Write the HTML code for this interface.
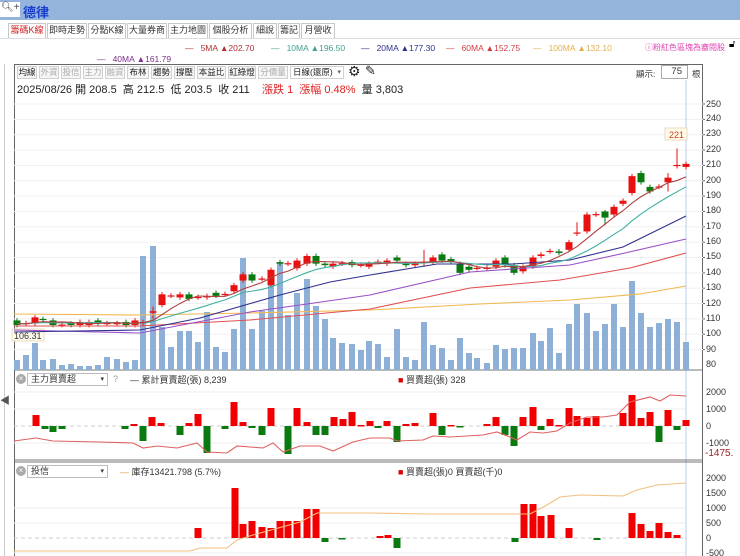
<!DOCTYPE html>
<html><head><meta charset="utf-8">
<style>
*{margin:0;padding:0;box-sizing:border-box}
body{width:740px;height:556px;overflow:hidden;background:#fff;font-family:"Liberation Sans","Noto Sans CJK TC",sans-serif;position:relative;font-size:11px;color:#333}
.abs{position:absolute;white-space:nowrap}
#top{left:0;top:0;width:740px;height:20px;background:#94b4dc}
.tab{position:absolute;top:23px;height:15px;border:1px solid #c8c8c8;border-bottom:none;background:#fff;font-size:9px;line-height:13px;text-align:center;color:#333;white-space:nowrap;overflow:hidden}
.tb{position:absolute;top:66px;height:13px;border:1px solid #d0d0d0;background:#f6f6f6;font-size:8.5px;line-height:11px;text-align:center;color:#222;white-space:nowrap;overflow:hidden}
.tb.d{color:#aaa}
.lg{font-size:8.5px}
</style></head><body>
<div id="top" class="abs"></div>
<div class="abs" style="left:0;top:2px;width:20px;height:15px;background:#fff"></div>
<div class="abs" style="left:1px;top:2px;font-size:10px;color:#444">🔍︎+</div>
<div class="abs" style="left:23px;top:2px;font-size:13px;font-weight:bold;color:#1a3fd0">德律</div>
<div class="abs" style="left:0;top:38px;width:740px;height:1px;background:#ddd"></div>
<div class="tab" style="left:8px;width:38px;color:#d02020">籌碼K線</div>
<div class="tab" style="left:47px;width:40px">即時走勢</div>
<div class="tab" style="left:88px;width:38px">分點K線</div>
<div class="tab" style="left:127px;width:40px">大量券商</div>
<div class="tab" style="left:168px;width:40px">主力地圖</div>
<div class="tab" style="left:209px;width:43px">個股分析</div>
<div class="tab" style="left:253px;width:24px">細說</div>
<div class="tab" style="left:278px;width:22px">籌記</div>
<div class="tab" style="left:301px;width:34px">月營收</div>

<div class="abs lg" style="left:185px;top:43px;color:#b03030">—&nbsp;&nbsp;&nbsp;5MA ▲202.70</div>
<div class="abs lg" style="left:271px;top:43px;color:#40a090">—&nbsp;&nbsp;&nbsp;10MA ▲196.50</div>
<div class="abs lg" style="left:361px;top:43px;color:#303090">—&nbsp;&nbsp;&nbsp;20MA ▲177.30</div>
<div class="abs lg" style="left:446px;top:43px;color:#d04040">—&nbsp;&nbsp;&nbsp;60MA ▲152.75</div>
<div class="abs lg" style="left:533px;top:43px;color:#e0b050">—&nbsp;&nbsp;&nbsp;100MA ▲132.10</div>
<div class="abs" style="left:645px;top:42px;font-size:8px;color:#e040b0">ⓘ粉紅色區塊為審閱股</div>
<div class="abs" style="left:729px;top:39px;font-size:10px;color:#000">🔓︎</div>
<div class="abs lg" style="left:97px;top:54px;color:#803090">—&nbsp;&nbsp;&nbsp;40MA ▲161.79</div>

<div class="abs" style="left:14px;top:64px;width:689px;height:492px;border:1px solid #666;border-bottom:none"></div>
<div class="abs" style="left:4px;top:64px;width:1px;height:492px;background:#ccc"></div>
<div class="abs" style="left:0;top:392px;font-size:10px;color:#555">◀</div>

<div class="tb" style="left:17px;width:20px">均線</div>
<div class="tb d" style="left:39px;width:20px">外資</div>
<div class="tb d" style="left:61px;width:20px">投信</div>
<div class="tb d" style="left:83px;width:20px">主力</div>
<div class="tb d" style="left:105px;width:20px">融資</div>
<div class="tb" style="left:127px;width:22px">布林</div>
<div class="tb" style="left:151px;width:21px">趨勢</div>
<div class="tb" style="left:174px;width:21px">撐壓</div>
<div class="tb" style="left:197px;width:29px">本益比</div>
<div class="tb" style="left:228px;width:28px">紅綠燈</div>
<div class="tb d" style="left:258px;width:30px">分價量</div>
<div class="tb" style="left:290px;width:54px;background:#fff;text-align:left;padding-left:2px">日線(還原)<span style="float:right;font-size:7px;color:#666;margin-right:2px">▾</span></div>
<div class="abs" style="left:348px;top:63px;font-size:14px;color:#222">⚙</div>
<div class="abs" style="left:365px;top:63px;font-size:13px;color:#222">✎</div>
<div class="abs" style="left:636px;top:68px;font-size:8.5px;color:#333">顯示:</div>
<div class="abs" style="left:661px;top:65px;width:27px;height:14px;border:1px solid #aaa;font-size:9.5px;line-height:12px;text-align:right;padding-right:5px">75</div>
<div class="abs" style="left:692px;top:68px;font-size:8.5px;color:#333">根</div>
<div class="abs" style="left:17px;top:81px;font-size:11px;color:#222">2025/08/26 開 208.5&nbsp; 高 212.5&nbsp; 低 203.5&nbsp; 收 211&nbsp;&nbsp;&nbsp; <span style="color:#e02020">漲跌 1&nbsp; 漲幅 0.48%</span>&nbsp; 量 3,803</div>

<div class="abs" style="left:27px;top:373px;width:81px;height:13px;border:1px solid #bbb;font-size:9px;line-height:11px;padding-left:3px;color:#333">主力買賣超<span style="float:right;font-size:7px;margin-right:3px">▾</span></div>
<div class="abs" style="left:16px;top:374px;width:10px;height:10px;border-radius:50%;background:#aaa;color:#fff;font-size:8px;line-height:10px;text-align:center">×</div>
<div class="abs" style="left:113px;top:374px;font-size:9px;color:#999">?</div>
<div class="abs" style="left:130px;top:373px;font-size:9px;color:#333">— 累計買賣超(張) 8,239</div>
<div class="abs" style="left:398px;top:373px;font-size:9px;color:#333"><span style="color:#d00">■</span> 買賣超(張) 328</div>

<div class="abs" style="left:27px;top:465px;width:81px;height:13px;border:1px solid #bbb;font-size:9px;line-height:11px;padding-left:3px;color:#333">投信<span style="float:right;font-size:7px;margin-right:3px">▾</span></div>
<div class="abs" style="left:16px;top:466px;width:10px;height:10px;border-radius:50%;background:#aaa;color:#fff;font-size:8px;line-height:10px;text-align:center">×</div>
<div class="abs" style="left:120px;top:465px;font-size:9px;color:#333"><span style="color:#e0a040">—</span> 庫存13421.798 (5.7%)</div>
<div class="abs" style="left:398px;top:465px;font-size:9px;color:#333"><span style="color:#d00">■</span> 買賣超(張)0 買賣超(千)0</div>

<svg class="abs" style="left:0;top:0" width="740" height="556" id="g">
<g font-family="Liberation Sans" font-size="9" fill="#333">
<text x="706" y="107">250</text><text x="706" y="136">230</text><text x="706" y="121">240</text>
<text x="706" y="152">220</text><text x="706" y="167">210</text><text x="706" y="183">200</text>
<text x="706" y="198">190</text><text x="706" y="213">180</text><text x="706" y="229">170</text>
<text x="706" y="244">160</text><text x="706" y="259">150</text><text x="706" y="275">140</text>
<text x="706" y="290">130</text><text x="706" y="306">120</text><text x="706" y="321">110</text>
<text x="706" y="336">100</text><text x="706" y="352">90</text><text x="706" y="367">80</text>
<text x="706" y="395">2000</text><text x="706" y="412">1000</text><text x="706" y="429">0</text>
<text x="706" y="446">-1000</text>
<text x="705" y="456" fill="#a02020" font-size="10">-1475.</text>
<text x="706" y="481">2000</text><text x="706" y="496">1500</text><text x="706" y="511">1000</text>
<text x="706" y="526">500</text><text x="706" y="541">0</text><text x="706" y="556">-500</text>
</g>
<rect x="665" y="128" width="22" height="12" fill="#fffbe8" stroke="#e8dcc0"/>
<text x="669" y="138" font-family="Liberation Sans" font-size="9" fill="#d04020">221</text>
<rect x="12" y="329" width="32" height="12" fill="#fffbe8" stroke="#e8dcc0"/>
<text x="14" y="339" font-family="Liberation Sans" font-size="9" fill="#334">106.31</text>
</svg>
<script>
var S='http://www.w3.org/2000/svg',g=document.getElementById('g');
function el(t,a){var e=document.createElementNS(S,t);for(var k in a)e.setAttribute(k,a[k]);g.insertBefore(e,g.firstChild);return e}
function Y(p){return 104+(250-p)*1.535}
[[14,370,703,370],[14,460,703,460],[14,462,703,462]].forEach(function(l){el('line',{x1:l[0],y1:l[1],x2:l[2],y2:l[3],stroke:'#777'})});
el('line',{x1:686,y1:80,x2:686,y2:556,stroke:'#b8cce8'});
for(var p=90;p<=250;p+=10){el('line',{x1:14,y1:Y(p),x2:703,y2:Y(p),stroke:'#f0f0f0'});el('line',{x1:702,y1:Y(p),x2:705,y2:Y(p),stroke:'#666'})}
[392,409,443].forEach(function(y){el('line',{x1:14,y1:y,x2:686,y2:y,stroke:'#eee'})});
[508,523,553].forEach(function(y){el('line',{x1:14,y1:y,x2:686,y2:y,stroke:'#eee'})});
el('line',{x1:14,y1:426,x2:686,y2:426,stroke:'#ccc','stroke-dasharray':'4,3'});
el('line',{x1:14,y1:538,x2:686,y2:538,stroke:'#ccc','stroke-dasharray':'4,3'});
var vx=[17,26,35,43,53,62,71,80,89,98,107,117,126,135,143,153,162,171,180,189,198,207,216,225,234,243,252,262,271,280,288,297,307,316,325,333,342,352,361,369,378,387,397,406,415,424,433,442,451,460,469,477,487,496,505,514,523,533,541,550,559,569,577,587,596,605,614,623,632,641,650,659,668,677,686];
var vy=[360,355,343,360,359,365,364,366,366,365,357,359,362,360,256,246,327,347,331,331,342,312,347,352,329,258,329,311,285,262,315,293,279,306,319,338,343,344,350,341,344,357,329,357,360,322,345,348,360,338,353,358,363,345,349,348,348,333,341,328,353,324,304,313,331,324,304,327,281,313,327,323,319,322,342];
var G=document.createElementNS(S,'g');
for(var i=0;i<vx.length;i++){var r=document.createElementNS(S,'rect');r.setAttribute('x',vx[i]-3);r.setAttribute('y',vy[i]);r.setAttribute('width',6);r.setAttribute('height',370-vy[i]);r.setAttribute('fill','#8fb0d6');G.appendChild(r)}
g.appendChild(G);
var C=[[109,106],[107,107.3],[107,111],[110,109.5],[109,106],[106,106.3],[107,106],[106,108],[106,108],[109,107],[107,107.3],[107,107.3],[108,106],[106,109],[107,108],[114,115,110,118],[119,126],[125,125.3],[124,126],[126,123],[124,124.3],[124,125],[127,125],[126,126.3],[128,132],[135,139],[139,135],[136,136.3],[132,142],[147,146],[146,146.3],[143,148],[146,151],[151,146],[146,145],[144,146],[146,146.3],[147,145],[145,145.3],[144,146],[147,147.3],[146,148],[150,148],[146,145],[145,146],[147,147.3,144,155],[147,150],[152,148],[149,147],[146,140],[144,142],[143,143.3],[143,143.3],[144,148],[150,145],[145,140],[141,144],[144,150],[151,152],[154,154.3],[154,153],[155,160],[166,166.3,164,173],[167,178],[178,178.3],[180,176,171,181],[178,183],[185,187],[192,203],[205,199],[196,193],[196,196.3],[199,202,193,205],[210,210.3,208,221],[209,211]];
var closes=[];
for(var i=0;i<C.length;i++){var c=C[i],o=c[0],cl=c[1],up=cl>=o,col=up?'#e81010':'#0a7a10';
 var hi=c[3]||Math.max(o,cl)+1.5,lo=c[2]||Math.min(o,cl)-1.5;closes.push(cl);
 var ln=document.createElementNS(S,'line');ln.setAttribute('x1',vx[i]);ln.setAttribute('x2',vx[i]);ln.setAttribute('y1',Y(hi));ln.setAttribute('y2',Y(lo));ln.setAttribute('stroke',col);g.appendChild(ln);
 var h=Math.max(1.2,Math.abs(Y(o)-Y(cl)));var r=document.createElementNS(S,'rect');r.setAttribute('x',vx[i]-3.5);r.setAttribute('y',Math.min(Y(o),Y(cl)));r.setAttribute('width',7);r.setAttribute('height',h);r.setAttribute('fill',col);g.appendChild(r)}
function pl(pts,col){var e=document.createElementNS(S,'polyline');e.setAttribute('points',pts.map(function(p){return p.join(',')}).join(' '));e.setAttribute('fill','none');e.setAttribute('stroke',col);e.setAttribute('stroke-width',1.1);g.appendChild(e)}
pl([[14,314],[140,315],[250,313],[370,310],[480,304],[570,300],[640,294],[686,286]],'#f0b850');
pl([[14,326],[140,326],[250,320],[370,309],[470,288],[560,280],[630,268],[686,253]],'#e05050');
pl([[14,330],[140,333],[250,312],[300,305],[370,295],[470,272],[570,265],[625,253],[686,239]],'#9a50c8');
pl([[14,332],[140,330],[200,318],[280,295],[330,282],[370,275],[437,264],[513,264],[570,260],[623,247],[686,216]],'#303090');
function ma(n,col){var pts=[];for(var i=0;i<closes.length;i++){var s=0;for(var j=i-n+1;j<=i;j++)s+=(j<0?107:closes[j]);pts.push([vx[i],Y(s/n)])}pl(pts,col)}
ma(10,'#40b0a0');ma(5,'#b04040');
var b1={36:415,45:429,53:432,62:429,125:429,134:424,143:441,152:417,161:423,180:435,189:423,198:414,207:453,225:429,234:402,243:422,252:428,262:435,271:408,288:454,297:408,307:422,316:435,325:435,334:417,343:419,352:412,361:425,370:421,378:428,387:421,397:442,406:424,415:423,433:413,442:435,451:425,460:427,487:424,496:417,505:435,514:446,523:417,533:407,541:430,550:419,559:425,569:408,577:416,587:418,596:416,623:413,632:395,641:418,650:412,659:442,668:410,677:430,686:420};
function bars(b,z){for(var k in b){var x=+k,y=b[k],up=y<z;var r=document.createElementNS(S,'rect');r.setAttribute('x',x-3.5);r.setAttribute('y',Math.min(y,z));r.setAttribute('width',7);r.setAttribute('height',Math.max(1.5,Math.abs(y-z)));r.setAttribute('fill',up?'#f00000':'#0a7a10');g.appendChild(r)}}
bars(b1,426);
pl([[14,441],[36,438],[53,441],[100,442],[133,443],[143,448],[157,446],[177,448],[197,443],[207,452],[227,453],[237,446],[263,448],[273,443],[283,452],[300,446],[320,446],[333,451],[353,442],[370,438],[390,438],[397,441],[423,440],[433,436],[450,437],[483,435],[497,432],[510,437],[517,440],[530,432],[543,433],[557,431],[570,423],[587,417],[603,417],[617,415],[630,402],[650,397],[660,401],[670,395],[686,396]],'#e06060');
var b2={198:528,235:488,243:524,252:521,262:527,271:528,280:521,288:521,297:521,307:509,316:509,325:542,342:539,380:536,388:535,397:548,515:542,524:504,533:504,541:516,551:515,569:528,597:540,632:513,641:524,650:531,659:523,668:532,677:535};
bars(b2,538);
pl([[14,551],[190,551],[200,548],[227,548],[237,540],[253,535],[300,522],[317,513],[370,513],[430,514],[530,514],[547,505],[560,497],[580,495],[623,496],[637,490],[657,485],[686,483]],'#f0c080');
</script>
</body></html>
